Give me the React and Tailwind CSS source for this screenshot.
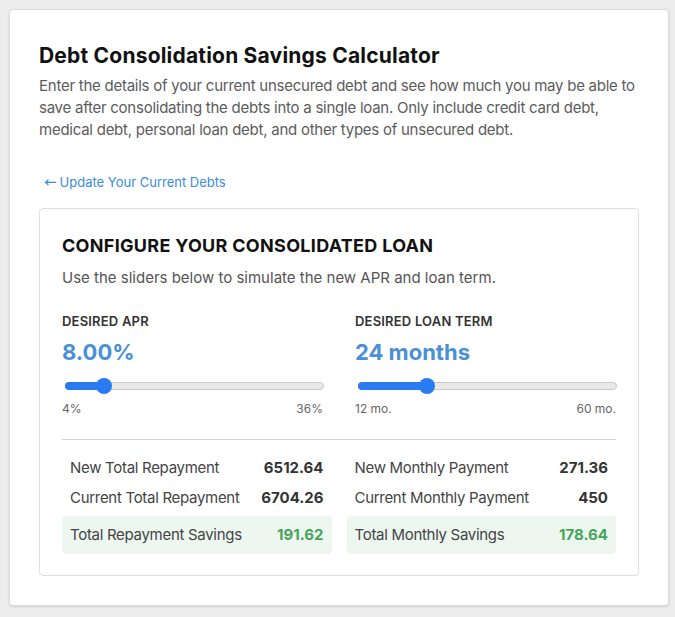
import { useState } from 'react';

function Slider({ label, value, display, min, max, minLabel, maxLabel }) {
  const frac = (value - min) / (max - min);
  const pos = `calc(8px + ${frac} * (100% - 16px))`;
  return (
    <div>
      <div className="text-[13px] leading-[18px] font-semibold text-[#333] tracking-[0.2px]">{label}</div>
      <div className="mt-[8px] text-[22px] leading-[28px] font-bold text-[#4a90d9]">{display}</div>
      <div className="relative mt-[16px] ml-[3px] mr-[-1px] h-[8px] rounded-full bg-[#e9e9e9] border border-[#c9c9c9]">
        <div className="absolute left-[-1px] top-[-1px] h-[8px] rounded-full bg-[#2a7af3]" style={{ width: pos }} />
        <div className="absolute top-1/2 w-[16px] h-[16px] -ml-[8px] -mt-[8px] rounded-full bg-[#2a7af3]" style={{ left: pos }} />
      </div>
      <div className="mt-[11px] flex justify-between text-[12px] leading-[16px] text-[#666]">
        <span>{minLabel}</span>
        <span>{maxLabel}</span>
      </div>
    </div>
  );
}

function Row({ label, value, savings }) {
  return (
    <div className={savings
      ? 'mt-[3px] flex justify-between px-2 py-2 rounded bg-[#edf7f0] text-[15px] leading-[22px]'
      : 'flex justify-between px-2 py-1 text-[15px] leading-[22px]'}>
      <span className="text-[#444] tracking-[-0.3px]">{label}</span>
      <span className={savings ? 'font-bold text-[#46a55b]' : 'font-bold text-[#333]'}>{value}</span>
    </div>
  );
}

export default function App() {
  const [apr] = useState(8);
  const [term] = useState(24);

  return (
    <div className="min-h-screen bg-[#eeeded] pt-[9px] pl-[9px] pb-[12px]" style={{ fontFamily: 'Inter, "Noto Sans", sans-serif' }}>
      <div className="w-[660px] bg-white border border-[#dcdcdc] rounded-[4px] shadow-sm px-[29px] pt-[32px] pb-[29px]">
        <h1 className="text-[21px] leading-[28px] font-bold text-[#111] tracking-[0.2px]">Debt Consolidation Savings Calculator</h1>
        <p className="mt-[5px] text-[15px] leading-[22px] text-[#5c5c5c] tracking-[-0.25px]">
          Enter the details of your current unsecured debt and see how much you may be able to save after consolidating the debts into a single loan. Only include credit card debt, medical debt, personal loan debt, and other types of unsecured debt.
        </p>

        <a href="#" className="mt-[32px] ml-[5px] flex items-center text-[13px] leading-[18px] text-[#3a8ddb]">
          <span className="mr-[3px] text-[15px] leading-[18px]" style={{ fontFamily: '"DejaVu Sans", sans-serif' }}>←</span>
          <span>Update Your Current Debts</span>
        </a>

        <div className="mt-[17px] w-[600px] border border-[#dddddd] rounded-[4px] px-[22px] pt-[25px] pb-[21px]">
          <h2 className="text-[18px] leading-[24px] font-bold text-[#111] tracking-[0.3px]">CONFIGURE YOUR CONSOLIDATED LOAN</h2>
          <p className="mt-[10px] text-[15px] leading-[20px] text-[#555]">Use the sliders below to simulate the new APR and loan term.</p>

          <div className="mt-[24px] grid grid-cols-2 gap-8">
            <Slider label="DESIRED APR" value={apr} display={apr.toFixed(2) + '%'} min={4} max={36} minLabel="4%" maxLabel="36%" />
            <Slider label="DESIRED LOAN TERM" value={term} display={term + ' months'} min={12} max={60} minLabel="12 mo." maxLabel="60 mo." />
          </div>

          <div className="mt-[22px] border-t border-[#d6d6d6] pt-[13px] grid grid-cols-2 gap-[15px]">
            <div>
              <Row label="New Total Repayment" value="6512.64" />
              <Row label="Current Total Repayment" value="6704.26" />
              <Row label="Total Repayment Savings" value="191.62" savings />
            </div>
            <div>
              <Row label="New Monthly Payment" value="271.36" />
              <Row label="Current Monthly Payment" value="450" />
              <Row label="Total Monthly Savings" value="178.64" savings />
            </div>
          </div>
        </div>
      </div>
    </div>
  );
}
